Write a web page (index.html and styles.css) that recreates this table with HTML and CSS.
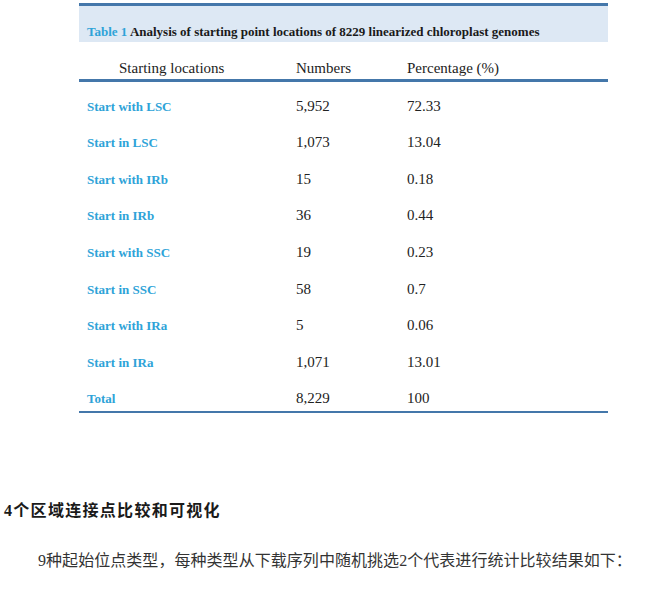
FILE: index.html
```html
<!DOCTYPE html>
<html>
<head>
<meta charset="utf-8">
<link rel="stylesheet" href="styles.css">
</head>
<body>
<div class="page">
  <div class="figure">
    <div class="caption"><span class="cap-no">Table 1</span> Analysis of starting point locations of 8229 linearized chloroplast genomes</div>
    <div class="row head">
      <div class="c1 hc1">Starting locations</div>
      <div class="c2">Numbers</div>
      <div class="c3">Percentage (%)</div>
    </div>
    <div class="body">
      <div class="row"><div class="c1 lbl">Start with LSC</div><div class="c2">5,952</div><div class="c3">72.33</div></div>
      <div class="row"><div class="c1 lbl">Start in LSC</div><div class="c2">1,073</div><div class="c3">13.04</div></div>
      <div class="row"><div class="c1 lbl">Start with IRb</div><div class="c2">15</div><div class="c3">0.18</div></div>
      <div class="row"><div class="c1 lbl">Start in IRb</div><div class="c2">36</div><div class="c3">0.44</div></div>
      <div class="row"><div class="c1 lbl">Start with SSC</div><div class="c2">19</div><div class="c3">0.23</div></div>
      <div class="row"><div class="c1 lbl">Start in SSC</div><div class="c2">58</div><div class="c3">0.7</div></div>
      <div class="row"><div class="c1 lbl">Start with IRa</div><div class="c2">5</div><div class="c3">0.06</div></div>
      <div class="row"><div class="c1 lbl">Start in IRa</div><div class="c2">1,071</div><div class="c3">13.01</div></div>
      <div class="row"><div class="c1 lbl">Total</div><div class="c2">8,229</div><div class="c3">100</div></div>
    </div>
  </div>
  <h3 class="heading">4个区域连接点比较和可视化</h3>
  <p class="para">9种起始位点类型，每种类型从下载序列中随机挑选2个代表进行统计比较结果如下：</p>
</div>
</body>
</html>
```

FILE: styles.css
```css
html, body {
  margin: 0;
  padding: 0;
  background: #ffffff;
}
.page {
  padding: 3px 0 0 4px;
  font-family: "Liberation Serif", "Noto Sans CJK SC", serif;
}
.figure {
  margin-left: 75px;
  width: 529px;
  border-top: 3px solid #4477aa;
  border-bottom: 2px solid #4477aa;
  color: #222222;
  font-family: "Liberation Serif", serif;
}
.caption {
  background: #dde8f4;
  height: 36px;
  box-sizing: border-box;
  padding: 18px 0 0 8px;
  font-size: 13px;
  font-weight: bold;
  line-height: 16px;
  color: #1a1a1a;
}
.cap-no {
  color: #2ea3d8;
}
.row {
  display: flex;
  align-items: flex-end;
  height: 36.6px;
  box-sizing: border-box;
  padding-bottom: 4px;
  font-size: 15px;
  line-height: 17px;
}
.row.head {
  height: 40px;
  padding-bottom: 2px;
  border-bottom: 3px solid #4477aa;
}
.c1 {
  width: 217px;
  padding-left: 8px;
  box-sizing: border-box;
}
.hc1 {
  padding-left: 40px;
}
.c2 {
  width: 111px;
}
.c3 {
  flex: 1;
}
.lbl {
  font-size: 13px;
  font-weight: bold;
  color: #2ea3d8;
}
.heading {
  margin: 88px 0 0 0;
  font-family: "Liberation Serif", "Noto Sans CJK SC", serif;
  font-size: 16px;
  letter-spacing: 1.3px;
  line-height: 20px;
  font-weight: bold;
  color: #1a1a1a;
}
.para {
  margin: 30px 0 0 34px;
  font-family: "Liberation Serif", "Noto Sans CJK SC", serif;
  font-size: 16px;
  letter-spacing: 0.05px;
  line-height: 20px;
  white-space: nowrap;
  color: #333333;
}
```
